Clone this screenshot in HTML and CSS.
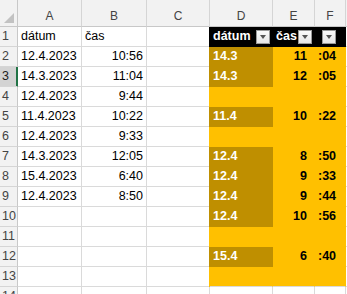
FILE: index.html
```html
<!DOCTYPE html>
<html lang="sk">
<head>
    <meta charset="UTF-8">
    <title>Hárok1</title>
    <link rel="stylesheet" href="styles.css">
</head>
<body>
<div class="sheet">
    <!-- hlavička stĺpcov -->
    <div class="corner"><span class="tri"></span></div>
    <div class="colh">A</div>
    <div class="colh">B</div>
    <div class="colh">C</div>
    <div class="colh">D</div>
    <div class="colh">E</div>
    <div class="colh">F</div>
    <div class="colh colg"></div>

    <!-- 1 -->
    <div class="rowh">1</div>
    <div class="cell">dátum</div>
    <div class="cell">čas</div>
    <div class="cell"></div>
    <div class="cell hd first">dátum<span class="flt"></span></div>
    <div class="cell hd">čas<span class="flt"></span></div>
    <div class="cell hd last"><span class="flt flt-f"></span></div>
    <div class="cell"></div>

    <!-- 2 -->
    <div class="rowh">2</div>
    <div class="cell">12.4.2023</div>
    <div class="cell num">10:56</div>
    <div class="cell"></div>
    <div class="cell gd first">14.3</div>
    <div class="cell y hr">11</div>
    <div class="cell y last mn">:04</div>
    <div class="cell"></div>

    <!-- 3 -->
    <div class="rowh sel">3</div>
    <div class="cell">14.3.2023</div>
    <div class="cell num">11:04</div>
    <div class="cell"></div>
    <div class="cell gd first">14.3</div>
    <div class="cell y hr">12</div>
    <div class="cell y last mn">:05</div>
    <div class="cell"></div>

    <!-- 4 -->
    <div class="rowh">4</div>
    <div class="cell">12.4.2023</div>
    <div class="cell num">9:44</div>
    <div class="cell"></div>
    <div class="cell y first"></div>
    <div class="cell y"></div>
    <div class="cell y last"></div>
    <div class="cell"></div>

    <!-- 5 -->
    <div class="rowh">5</div>
    <div class="cell">11.4.2023</div>
    <div class="cell num">10:22</div>
    <div class="cell"></div>
    <div class="cell gd first">11.4</div>
    <div class="cell y hr">10</div>
    <div class="cell y last mn">:22</div>
    <div class="cell"></div>

    <!-- 6 -->
    <div class="rowh">6</div>
    <div class="cell">12.4.2023</div>
    <div class="cell num">9:33</div>
    <div class="cell"></div>
    <div class="cell y first"></div>
    <div class="cell y"></div>
    <div class="cell y last"></div>
    <div class="cell"></div>

    <!-- 7 -->
    <div class="rowh">7</div>
    <div class="cell">14.3.2023</div>
    <div class="cell num">12:05</div>
    <div class="cell"></div>
    <div class="cell gd first">12.4</div>
    <div class="cell y hr">8</div>
    <div class="cell y last mn">:50</div>
    <div class="cell"></div>

    <!-- 8 -->
    <div class="rowh">8</div>
    <div class="cell">15.4.2023</div>
    <div class="cell num">6:40</div>
    <div class="cell"></div>
    <div class="cell gd first">12.4</div>
    <div class="cell y hr">9</div>
    <div class="cell y last mn">:33</div>
    <div class="cell"></div>

    <!-- 9 -->
    <div class="rowh">9</div>
    <div class="cell">12.4.2023</div>
    <div class="cell num">8:50</div>
    <div class="cell"></div>
    <div class="cell gd first">12.4</div>
    <div class="cell y hr">9</div>
    <div class="cell y last mn">:44</div>
    <div class="cell"></div>

    <!-- 10 -->
    <div class="rowh">10</div>
    <div class="cell"></div>
    <div class="cell"></div>
    <div class="cell"></div>
    <div class="cell gd first">12.4</div>
    <div class="cell y hr">10</div>
    <div class="cell y last mn">:56</div>
    <div class="cell"></div>

    <!-- 11 -->
    <div class="rowh">11</div>
    <div class="cell"></div>
    <div class="cell"></div>
    <div class="cell"></div>
    <div class="cell y first"></div>
    <div class="cell y"></div>
    <div class="cell y last"></div>
    <div class="cell"></div>

    <!-- 12 -->
    <div class="rowh">12</div>
    <div class="cell"></div>
    <div class="cell"></div>
    <div class="cell"></div>
    <div class="cell gd first">15.4</div>
    <div class="cell y hr">6</div>
    <div class="cell y last mn">:40</div>
    <div class="cell"></div>

    <!-- 13 -->
    <div class="rowh">13</div>
    <div class="cell"></div>
    <div class="cell"></div>
    <div class="cell"></div>
    <div class="cell y first end"></div>
    <div class="cell y end"></div>
    <div class="cell y last end"></div>
    <div class="cell"></div>

    <!-- 14 -->
    <div class="rowh">14</div>
    <div class="cell"></div>
    <div class="cell"></div>
    <div class="cell"></div>
    <div class="cell"></div>
    <div class="cell"></div>
    <div class="cell"></div>
    <div class="cell"></div>
</div>
</body>
</html>
```

FILE: styles.css
```css
html,body{
    height: 100%;
    overflow: hidden;
}
*{
    margin:0;
    padding:0;
    box-sizing: border-box;
}
body{
    background: #fff;
    font-family: "Liberation Sans", Arial, sans-serif;
    font-size: 12.5px;
    color: #000;
}
.sheet{
    display: grid;
    grid-template-columns: 18px 64px 65px 63px 63px 42px 31px 1fr;
    grid-template-rows: 27px;
    grid-auto-rows: 20px;
}
.corner{
    background: #f2f2f2;
    border-right: 1px solid #c8c8c8;
    border-bottom: 1px solid #c8c8c8;
    display: flex;
    align-items: flex-end;
    justify-content: flex-end;
    padding: 0 3px 3px 0;
}
.tri{
    width: 0;
    height: 0;
    border-left: 10px solid transparent;
    border-bottom: 10px solid #c2c2c2;
}
.colh{
    background: #f2f2f2;
    border-right: 1px solid #d5d5d5;
    border-bottom: 1px solid #c8c8c8;
    color: #444;
    font-size: 12px;
    text-align: center;
    padding-top: 9px;
}
.colg{
    border-right: none;
}
.rowh{
    background: #f2f2f2;
    border-right: 1px solid #c8c8c8;
    border-bottom: 1px solid #d5d5d5;
    color: #444;
    font-size: 12.5px;
    line-height: 19px;
    padding-left: 2px;
}
.rowh.sel{
    background: #d3d3d3;
    color: #222;
    border-right-color: #217346;
    box-shadow: inset -1px 0 0 #217346;
}
.cell{
    border-right: 1px solid #dadada;
    border-bottom: 1px solid #dadada;
    line-height: 19px;
    padding: 0 3px;
    white-space: nowrap;
    overflow: hidden;
}
.num{
    text-align: right;
}

/* tabuľka vpravo */
.hd{
    background: #000;
    color: #fff;
    font-weight: bold;
    border-color: #000;
    display: flex;
    align-items: center;
    padding-right: 2px;
    overflow: visible;
}
.hd.first{
    box-shadow: -1px 0 0 #000;
}
.flt{
    margin-left: auto;
    width: 14px;
    height: 14px;
    background: linear-gradient(#fbfbfb, #e6e6e6);
    border: 1px solid #9a9a9a;
    position: relative;
}
.flt:after{
    content: "";
    position: absolute;
    left: 3px;
    top: 4px;
    border-left: 3.5px solid transparent;
    border-right: 3.5px solid transparent;
    border-top: 4px solid #555;
}
.flt-f{
    margin-right: 7px;
}
.y{
    background: #ffc000;
    border-color: #ffc000;
}
.y.first{
    box-shadow: -1px 0 0 #ffc000;
}
.gd{
    background: #bf8f00;
    border-color: #bf8f00;
    color: #fff;
    font-weight: bold;
    box-shadow: -1px 0 0 #bf8f00;
}
.hr{
    text-align: right;
    font-weight: bold;
    padding-right: 7px;
}
.mn{
    font-weight: bold;
    padding-left: 3px;
}
.end{
    border-bottom-color: #dadada;
}
```
